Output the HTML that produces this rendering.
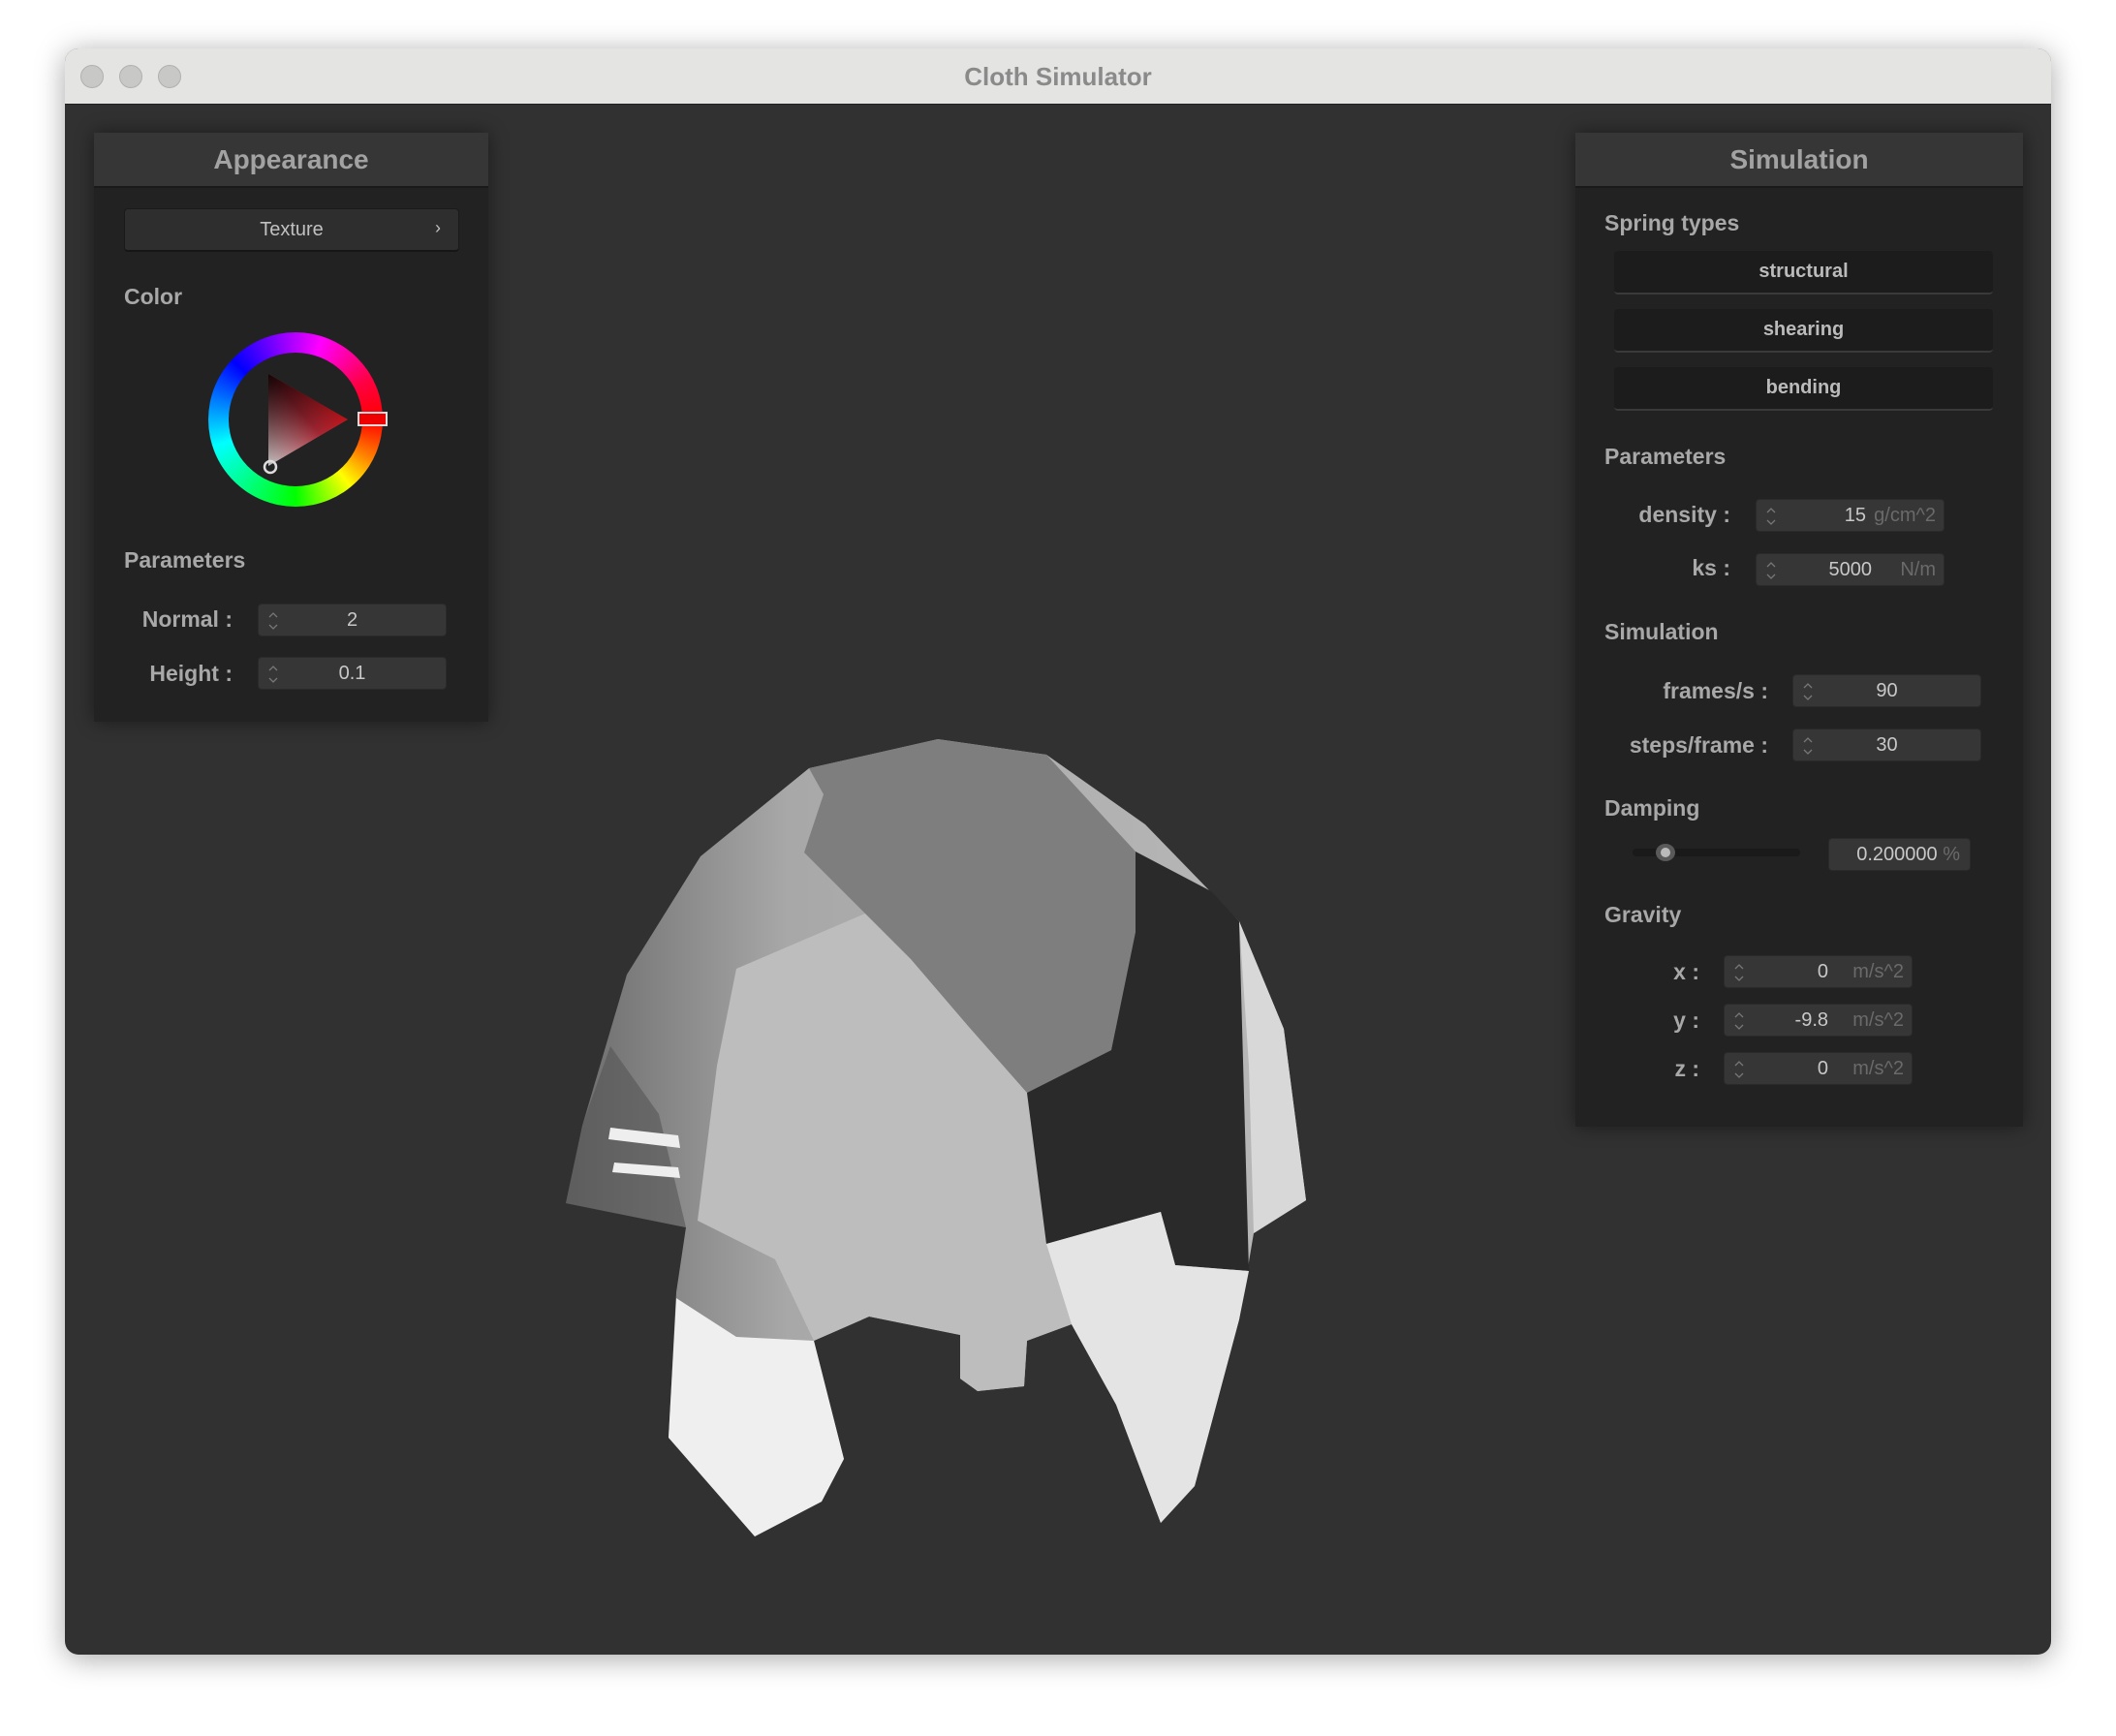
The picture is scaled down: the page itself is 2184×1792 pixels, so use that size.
<!DOCTYPE html>
<html><head><meta charset="utf-8"><style>
*{margin:0;padding:0;box-sizing:border-box}
body{width:2184px;height:1792px;background:#fff;position:relative;overflow:hidden;font-family:"Liberation Sans",sans-serif}
.win{position:absolute;left:67px;top:50px;width:2050px;height:1658px;border-radius:14px;overflow:hidden;background:#313131;box-shadow:0 4px 30px rgba(0,0,0,.35)}
.tb{position:absolute;left:0;top:0;width:100%;height:58px;background:#e4e4e2;border-bottom:1px solid #222}
.tl{position:absolute;top:17px;width:24px;height:24px;border-radius:50%;background:#c8c8c6;border:1px solid #b0b0ae}
.ttl{position:absolute;left:0;width:100%;top:14px;text-align:center;font-size:26px;font-weight:bold;color:#8a8a8a}
.panel{position:absolute;background:#222;box-shadow:0 0 18px rgba(0,0,0,.45)}
.ph{position:absolute;left:0;top:0;width:100%;height:57px;background:#363636;border-bottom:2px solid #1a1a1a;text-align:center;font-size:28px;line-height:56px;color:#a2a2a2;font-weight:bold}
.lbl{position:absolute;font-size:23px;font-weight:bold;color:#a8a8a8;white-space:nowrap}
.rl{position:absolute;font-size:23px;font-weight:bold;color:#a8a8a8;text-align:right;white-space:nowrap}
.fld{position:absolute;height:34px;background:#363636;border-radius:4px;border:1px solid #2a2a2a;color:#c8c8c8;font-size:20px;line-height:33px}
.fld svg{position:absolute;left:9px;top:6px}
.btn{position:absolute;background:#1c1c1c;border-radius:4px;border-bottom:2px solid #3a3a3a;color:#bbb;font-size:20px;font-weight:bold;text-align:center}
.u{color:#6a6a6a}
</style></head><body>
<div class="win">
<div class="tb"><div class="tl" style="left:16px"></div><div class="tl" style="left:56px"></div><div class="tl" style="left:96px"></div><div class="ttl">Cloth Simulator</div></div>

<svg style="position:absolute;left:0;top:0" width="2050" height="1658" viewBox="67 50 2050 1658">
<defs>
<linearGradient id="gl" x1="0" x2="1" y1="0" y2="0"><stop offset="0" stop-color="#6a6a6a"/><stop offset=".3" stop-color="#a8a8a8"/><stop offset="1" stop-color="#b8b8b8"/></linearGradient>
</defs>
<path fill="url(#gl)" d="M968 763 L1080 779 L1182 851 L1279 951 L1325 1062 L1348 1239 L1294 1273 L1279 1362 L1233 1534 L1198 1572 L1152 1450 L1106 1367 L1060 1384 L1057 1431 L1009 1436 L991 1423 L991 1378 L897 1359 L840 1384 L871 1506 L848 1550 L779 1586 L690 1484 L698 1334 L708 1267 L584 1242 L601 1162 L647 1006 L723 884 L835 793 Z"/>
<path fill="#bdbdbd" d="M760 1000 L900 940 L1000 960 L1060 1128 L1080 1284 L1106 1367 L1060 1384 L1057 1431 L1009 1436 L991 1423 L991 1378 L897 1359 L840 1384 L800 1300 L720 1260 L740 1100 Z"/>
<path fill="#7e7e7e" d="M835 793 L968 763 L1080 779 L1172 879 L1172 962 L1147 1084 L1060 1128 L1000 1060 L940 990 L880 930 L830 880 L850 820 Z"/>
<path fill="#2a2a2a" d="M1172 879 L1250 920 L1279 951 L1289 1312 L1213 1306 L1198 1251 L1080 1284 L1060 1128 L1147 1084 L1172 962 Z"/>
<path fill="#d8d8d8" d="M1279 951 L1325 1062 L1348 1239 L1294 1273 L1289 1100 Z"/>
<path fill="#e4e4e4" d="M1080 1284 L1198 1251 L1213 1306 L1289 1312 L1279 1362 L1233 1534 L1198 1572 L1152 1450 L1106 1367 Z"/>
<path fill="#efefef" d="M698 1340 L760 1380 L840 1384 L871 1506 L848 1550 L779 1586 L690 1484 Z"/>
<path fill="#555" d="M584 1242 L601 1162 L630 1080 L680 1150 L708 1267 Z" opacity=".6"/>
<path fill="#eee" d="M630 1164 L700 1172 L702 1185 L628 1176 Z M634 1200 L700 1205 L702 1216 L632 1210 Z"/>
</svg>

<div class="panel" style="left:30px;top:87px;width:407px;height:608px">
<div class="ph">Appearance</div>
<div class="btn" style="left:31px;top:78px;width:346px;height:45px;background:#2e2e2e;border:1px solid #1a1a1a;border-bottom:2px solid #161616;line-height:43px;font-weight:normal;color:#c0c0c0">Texture<span style="position:absolute;right:18px;top:-2px;font-size:18px">›</span></div>
<div class="lbl" style="left:31px;top:156px">Color</div>
<div style="position:absolute;left:118px;top:206px;width:180px;height:180px;border-radius:50%;background:conic-gradient(from 90deg,#f00,#f80 8%,#ff0 14%,#0f0 25%,#0ff 45%,#00f 62%,#f0f 80%,#f04 92%,#f00);"></div>
<div style="position:absolute;left:139px;top:227px;width:138px;height:138px;border-radius:50%;background:#222"></div>
<svg style="position:absolute;left:0;top:0" width="407" height="608"><defs><linearGradient id="tg" x1="0" y1="1" x2="1" y2="0"><stop offset="0" stop-color="#fff"/><stop offset=".5" stop-color="#d03040"/><stop offset="1" stop-color="#f00"/></linearGradient><linearGradient id="tk" x1="0" y1="0" x2="0.6" y2="1"><stop offset="0" stop-color="#000" stop-opacity=".9"/><stop offset="1" stop-color="#000" stop-opacity="0"/></linearGradient></defs>
<polygon points="180,249 262,296 180,344" fill="url(#tg)"/><polygon points="180,249 262,296 180,344" fill="url(#tk)"/>
<rect x="273" y="289" width="29" height="13" fill="#e00" stroke="#ddd" stroke-width="2"/>
<circle cx="182" cy="345" r="6" fill="none" stroke="#ddd" stroke-width="2.5"/></svg>
<div class="lbl" style="left:31px;top:428px">Parameters</div>
<div class="rl" style="left:0;width:143px;top:489px">Normal :</div>
<div class="fld" style="left:169px;top:486px;width:195px"><svg width="12" height="22"><path d="M2 7 L6 3 L10 7 M2 15 L6 19 L10 15" fill="none" stroke="#777" stroke-width="1.3"/></svg><span style="position:absolute;left:0;width:100%;text-align:center">2</span></div>
<div class="rl" style="left:0;width:143px;top:545px">Height :</div>
<div class="fld" style="left:169px;top:541px;width:195px"><svg width="12" height="22"><path d="M2 7 L6 3 L10 7 M2 15 L6 19 L10 15" fill="none" stroke="#777" stroke-width="1.3"/></svg><span style="position:absolute;left:0;width:100%;text-align:center">0.1</span></div>
</div>

<div class="panel" style="left:1559px;top:87px;width:462px;height:1026px">
<div class="ph">Simulation</div>
<div class="lbl" style="left:30px;top:80px">Spring types</div>
<div class="btn" style="left:40px;top:122px;width:391px;height:45px;line-height:43px">structural</div>
<div class="btn" style="left:40px;top:182px;width:391px;height:45px;line-height:43px">shearing</div>
<div class="btn" style="left:40px;top:242px;width:391px;height:45px;line-height:43px">bending</div>
<div class="lbl" style="left:30px;top:321px">Parameters</div>
<div class="rl" style="left:0;width:160px;top:381px">density :</div>
<div class="fld" style="left:186px;top:378px;width:195px"><svg width="12" height="22"><path d="M2 7 L6 3 L10 7 M2 15 L6 19 L10 15" fill="none" stroke="#777" stroke-width="1.3"/></svg><span style="position:absolute;right:80px">15</span><span class="u" style="position:absolute;right:8px">g/cm^2</span></div>
<div class="rl" style="left:0;width:160px;top:436px">ks :</div>
<div class="fld" style="left:186px;top:434px;width:195px"><svg width="12" height="22"><path d="M2 7 L6 3 L10 7 M2 15 L6 19 L10 15" fill="none" stroke="#777" stroke-width="1.3"/></svg><span style="position:absolute;right:74px">5000</span><span class="u" style="position:absolute;right:8px">N/m</span></div>
<div class="lbl" style="left:30px;top:502px">Simulation</div>
<div class="rl" style="left:0;width:199px;top:563px">frames/s :</div>
<div class="fld" style="left:224px;top:559px;width:195px"><svg width="12" height="22"><path d="M2 7 L6 3 L10 7 M2 15 L6 19 L10 15" fill="none" stroke="#777" stroke-width="1.3"/></svg><span style="position:absolute;left:0;width:100%;text-align:center">90</span></div>
<div class="rl" style="left:0;width:199px;top:619px">steps/frame :</div>
<div class="fld" style="left:224px;top:615px;width:195px"><svg width="12" height="22"><path d="M2 7 L6 3 L10 7 M2 15 L6 19 L10 15" fill="none" stroke="#777" stroke-width="1.3"/></svg><span style="position:absolute;left:0;width:100%;text-align:center">30</span></div>
<div class="lbl" style="left:30px;top:684px">Damping</div>
<div style="position:absolute;left:59px;top:739px;width:173px;height:8px;border-radius:4px;background:#1a1a1a"></div>
<div style="position:absolute;left:83px;top:734px;width:20px;height:18px;border-radius:50%;background:#5a5a5a"></div>
<div style="position:absolute;left:88px;top:738px;width:10px;height:10px;border-radius:50%;background:#bbb"></div>
<div class="fld" style="left:261px;top:728px;width:147px;text-align:right;padding-right:10px">0.200000<span class="u"> %</span></div>
<div class="lbl" style="left:30px;top:794px">Gravity</div>
<div class="rl" style="left:0;width:128px;top:853px">x :</div>
<div class="fld" style="left:153px;top:849px;width:195px"><svg width="12" height="22"><path d="M2 7 L6 3 L10 7 M2 15 L6 19 L10 15" fill="none" stroke="#777" stroke-width="1.3"/></svg><span style="position:absolute;right:86px">0</span><span class="u" style="position:absolute;right:8px">m/s^2</span></div>
<div class="rl" style="left:0;width:128px;top:903px">y :</div>
<div class="fld" style="left:153px;top:899px;width:195px"><svg width="12" height="22"><path d="M2 7 L6 3 L10 7 M2 15 L6 19 L10 15" fill="none" stroke="#777" stroke-width="1.3"/></svg><span style="position:absolute;right:86px">-9.8</span><span class="u" style="position:absolute;right:8px">m/s^2</span></div>
<div class="rl" style="left:0;width:128px;top:953px">z :</div>
<div class="fld" style="left:153px;top:949px;width:195px"><svg width="12" height="22"><path d="M2 7 L6 3 L10 7 M2 15 L6 19 L10 15" fill="none" stroke="#777" stroke-width="1.3"/></svg><span style="position:absolute;right:86px">0</span><span class="u" style="position:absolute;right:8px">m/s^2</span></div>
</div>
</div>
</body></html>
